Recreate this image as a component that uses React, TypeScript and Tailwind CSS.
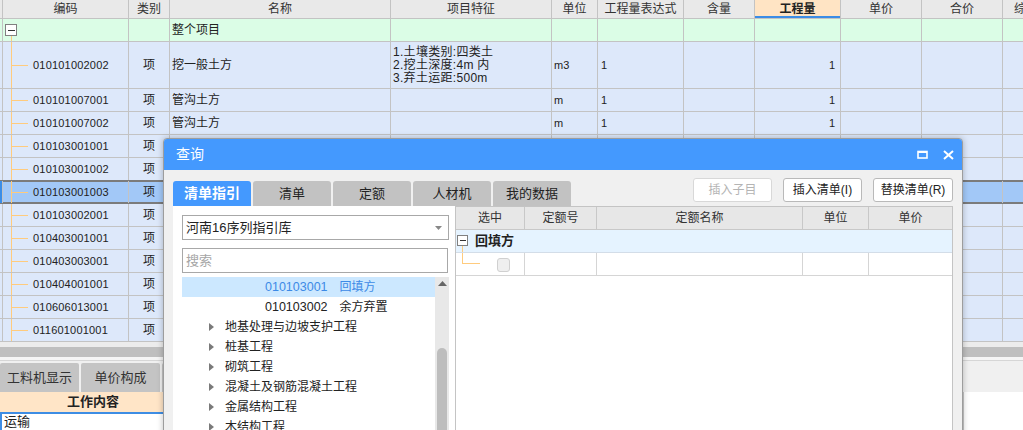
import React from "react";

const FONT = "font-['Liberation_Sans','Noto_Sans_CJK_SC',sans-serif]";

const W = [
  "w-[126px]",
  "w-[41px]",
  "w-[221px]",
  "w-[161px]",
  "w-[46px]",
  "w-[86px]",
  "w-[71px]",
  "w-[86px]",
  "w-[81px]",
  "w-[81px]",
  "flex-1",
];

const heads = ["编码", "类别", "名称", "项目特征", "单位", "工程量表达式", "含量", "工程量", "单价", "合价", "综合单价"];

type Row = {
  code: string;
  name: string;
  feat?: string[];
  unit?: string;
  expr?: string;
  qty?: string;
  tall?: boolean;
  sel?: boolean;
};

const rows: Row[] = [
  {
    code: "010101002002",
    name: "挖一般土方",
    feat: ["1.土壤类别:四类土", "2.挖土深度:4m 内", "3.弃土运距:500m"],
    unit: "m3",
    expr: "1",
    qty: "1",
    tall: true,
  },
  { code: "010101007001", name: "管沟土方", unit: "m", expr: "1", qty: "1" },
  { code: "010101007002", name: "管沟土方", unit: "m", expr: "1", qty: "1" },
  { code: "010103001001", name: "回填方" },
  { code: "010103001002", name: "回填方" },
  { code: "010103001003", name: "回填方", sel: true },
  { code: "010103002001", name: "余方弃置" },
  { code: "010403001001", name: "砖基础" },
  { code: "010403003001", name: "实心砖墙" },
  { code: "010404001001", name: "垫层" },
  { code: "010606013001", name: "零星钢构件" },
  { code: "011601001001", name: "砖砌体拆除" },
];

const line = "bg-[#ffcb7d]";

function MainTable() {
  return (
    <div className="flex flex-col">
      <div className="flex h-[19px] border-b border-[#c3c3c3] bg-[#e9e9e9] text-[12px] text-[#333]">
        <div className="w-[2px] shrink-0" />
        {heads.map((h, i) => (
          <div
            key={h}
            className={`${W[i]} shrink-0 border-l border-[#c3c3c3] flex items-center whitespace-nowrap overflow-hidden ${
              i === 10 ? "justify-start pl-[11px]" : "justify-center"
            } ${i === 7 ? "bg-[#ffe4c4] font-bold text-[#222] shadow-[inset_0_-2px_0_#3b8de6]" : ""}`}
          >
            {h}
          </div>
        ))}
      </div>

      {/* 整个项目 */}
      <div className="flex h-[23px] border-b border-[#c3c3c3] bg-[#dbfde6] text-[12px]">
        <div className="w-[2px] shrink-0" />
        <div className={`${W[0]} shrink-0 border-l border-[#c3c3c3] flex flex-col items-start pl-[2px] pt-[5px]`}>
          <div className="w-[12px] h-[12px] border border-[#808080] bg-white flex items-center justify-center">
            <div className="w-[7px] h-px bg-[#333]" />
          </div>
          <div className={`ml-[6px] w-px flex-1 ${line}`} />
        </div>
        <div className={`${W[1]} shrink-0 border-l border-[#c3c3c3]`} />
        <div className={`${W[2]} shrink-0 border-l border-[#c3c3c3] flex items-center pl-[2px]`}>整个项目</div>
        {[3, 4, 5, 6, 7, 8, 9, 10].map((i) => (
          <div key={i} className={`${W[i]} shrink-0 border-l border-[#c3c3c3]`} />
        ))}
      </div>

      {rows.map((r) => (
        <div
          key={r.code}
          className={`flex ${r.tall ? "h-[47px]" : "h-[23px]"} border-b text-[12px] ${
            r.sel
              ? "bg-[#a2c8f7] border-[#7b7b7b] shadow-[0_-1px_0_#7b7b7b,inset_0_1px_0_#7b7b7b,inset_0_-1px_0_#7b7b7b]"
              : "bg-[#dde8fa] border-[#c3c3c3]"
          }`}
        >
          <div className={`w-[2px] shrink-0 ${r.sel ? "bg-[#3b8de6]" : ""}`} />
          <div className={`${W[0]} shrink-0 border-l border-[#c3c3c3] flex pl-[8px]`}>
            <div className="w-[22px] shrink-0 border-l border-[#ffcb7d] flex items-center">
              <div className={`h-px w-[16px] ${line}`} />
            </div>
            <span className="self-center text-[11px] tracking-[0.2px]">{r.code}</span>
          </div>
          <div className={`${W[1]} shrink-0 border-l border-[#c3c3c3] flex items-center justify-center`}>项</div>
          <div className={`${W[2]} shrink-0 border-l border-[#c3c3c3] flex items-center pl-[2px]`}>{r.name}</div>
          <div className={`${W[3]} shrink-0 border-l border-[#c3c3c3] flex flex-col justify-center pl-[2px] text-[12px] leading-[13px] tracking-[0.3px] whitespace-nowrap`}>
            {r.feat?.map((f) => (
              <span key={f}>{f}</span>
            ))}
          </div>
          <div className={`${W[4]} shrink-0 border-l border-[#c3c3c3] flex items-center pl-[2px] text-[11px]`}>{r.unit}</div>
          <div className={`${W[5]} shrink-0 border-l border-[#c3c3c3] flex items-center pl-[3px] text-[11px]`}>{r.expr}</div>
          <div className={`${W[6]} shrink-0 border-l border-[#c3c3c3]`} />
          <div className={`${W[7]} shrink-0 border-l border-[#c3c3c3] flex items-center justify-end pr-[5px] text-[11px]`}>{r.qty}</div>
          <div className={`${W[8]} shrink-0 border-l border-[#c3c3c3]`} />
          <div className={`${W[9]} shrink-0 border-l border-[#c3c3c3]`} />
          <div className={`${W[10]} shrink-0 border-l border-[#c3c3c3]`} />
        </div>
      ))}
    </div>
  );
}

function BottomPanel() {
  return (
    <div className="flex flex-col">
      <div className="h-[5px] bg-[#ececec]" />
      <div className="h-[10px] bg-[#bfbfbf]" />
      <div className="h-[4px] bg-[#f5f5f5] border-b border-[#d6d6d6]" />
      <div className="flex h-[31px] items-end gap-[2px] bg-[#f0f0f0]">
        <div className="w-[79px] h-[29px] rounded-t-[2px] bg-[#c4c4c4] flex items-center justify-center text-[13px] text-[#333]">
          工料机显示
        </div>
        <div className="w-[79px] h-[29px] rounded-t-[2px] bg-[#c4c4c4] flex items-center justify-center text-[13px] text-[#333]">
          单价构成
        </div>
        <div className="w-[79px] h-[29px] rounded-t-[2px] bg-[#c4c4c4]" />
      </div>
      <div className="flex h-[38px]">
        <div className="w-[963px] flex flex-col">
          <div className="h-[20px] bg-[#ffe5c7] flex items-center">
            <span className="w-[186px] text-center font-bold text-[13px] text-[#222]">工作内容</span>
          </div>
          <div className="flex-1 border-t-2 border-l-2 border-[#3e8de4] bg-white pl-[2px] text-[13px] leading-[16px]">
            运输
          </div>
        </div>
        <div className="flex-1 bg-white border-l border-[#c8c8c8]" />
      </div>
    </div>
  );
}

const tabs = ["清单指引", "清单", "定额", "人材机", "我的数据"];

const chapters = [
  "地基处理与边坡支护工程",
  "桩基工程",
  "砌筑工程",
  "混凝土及钢筋混凝土工程",
  "金属结构工程",
  "木结构工程",
  "门窗工程",
];

function Arrow() {
  return (
    <svg width="5" height="8" viewBox="0 0 5 8" className="shrink-0">
      <path d="M0 0 L5 4 L0 8 Z" fill="#7a7a7a" />
    </svg>
  );
}

function QueryDialog() {
  return (
    <div className="absolute left-[163px] top-[138px] w-[800px] h-[300px] border border-[#9d9d9d] rounded-t-[4px] bg-[#f0f0f0] shadow-[0_0_6px_rgba(0,0,0,0.25)] flex flex-col overflow-hidden">
      <div className="h-[31px] shrink-0 bg-[#4499fe] flex items-center justify-between pl-[12px] pr-[8px]">
        <span className="text-[14px] text-white">查询</span>
        <div className="flex items-center gap-[15px]">
          <svg width="11" height="9" viewBox="0 0 11 9">
            <rect x="1" y="1.5" width="9" height="6.5" fill="none" stroke="#fff" strokeWidth="1.6" />
            <rect x="1" y="1" width="9" height="2" fill="#fff" />
          </svg>
          <svg width="11" height="10" viewBox="0 0 11 10">
            <path d="M1 1 L10 9 M10 1 L1 9" stroke="#fff" strokeWidth="2" />
          </svg>
        </div>
      </div>

      <div className="flex-1 flex flex-col px-[9px] pt-[8px]">
        <div className="flex justify-between h-[28px] shrink-0">
          <div className="flex items-end gap-[2px] h-full">
            {tabs.map((t, i) => (
              <div
                key={t}
                className={`w-[78px] h-[25px] rounded-t-[3px] flex items-center justify-center ${
                  i === 0 ? "bg-[#4499fe] text-white text-[14px] font-bold" : "bg-[#c2c2c2] text-[#222] text-[13px]"
                }`}
              >
                {t}
              </div>
            ))}
          </div>
          <div className="flex items-start gap-[11px]">
            <div className="w-[79px] h-[24px] rounded-[3px] border border-[#d8d8d8] bg-white flex items-center justify-center text-[12px] text-[#b4b4b4]">
              插入子目
            </div>
            <div className="w-[79px] h-[24px] rounded-[3px] border border-[#b9b9b9] bg-white flex items-center justify-center text-[12px] text-[#222]">
              插入清单(I)
            </div>
            <div className="w-[80px] h-[24px] rounded-[3px] border border-[#b9b9b9] bg-white flex items-center justify-center text-[12px] text-[#222]">
              替换清单(R)
            </div>
          </div>
        </div>

        <div className="flex flex-1">
          <div className="w-[282px] shrink-0 bg-white pl-[9px] pt-[9px] flex flex-col">
            <div className="w-[267px] h-[25px] border border-[#a8a8a8] flex items-center justify-between pl-[3px] pr-[6px] text-[13px] text-[#222]">
              <span>河南16序列指引库</span>
              <svg width="7" height="4" viewBox="0 0 7 4">
                <path d="M0 0 L7 0 L3.5 4 Z" fill="#888" />
              </svg>
            </div>
            <div className="mt-[8px] w-[266px] h-[25px] border border-[#a8a8a8] flex items-center pl-[3px] text-[13px] text-[#a6a6a6]">
              搜索
            </div>
            <div className="mt-[4px] flex flex-1">
              <div className="w-[253px] flex flex-col text-[12px]">
                <div className="h-[20px] bg-[#cce8ff] flex items-center pl-[83px] gap-[12px] text-[#3d8ae6]">
                  <span className="text-[12.5px]">010103001</span>
                  <span>回填方</span>
                </div>
                <div className="h-[20px] flex items-center pl-[83px] gap-[12px] text-[#222]">
                  <span className="text-[12.5px]">010103002</span>
                  <span>余方弃置</span>
                </div>
                {chapters.map((c) => (
                  <div key={c} className="h-[20px] flex items-center pl-[27px] gap-[11px] text-[#222]">
                    <Arrow />
                    <span>{c}</span>
                  </div>
                ))}
              </div>
              <div className="w-[14px] bg-[#e8e8e8] flex flex-col items-center pt-[4px]">
                <svg width="9" height="5" viewBox="0 0 9 5">
                  <path d="M0 5 L4.5 0 L9 5 Z" fill="#666" />
                </svg>
                <div className="mt-[62px] w-[10px] flex-1 rounded-full bg-[#bdbdbd]" />
              </div>
            </div>
          </div>

          <div className="w-[498px] shrink-0 border border-[#c4c4c4] bg-white flex flex-col text-[12px] text-[#333]">
            <div className="flex h-[23px] bg-[#e7e7e7] border-b border-[#c8c8c8]">
              <div className="w-[69px] border-r border-[#c8c8c8] flex items-center justify-center">选中</div>
              <div className="w-[72px] border-r border-[#c8c8c8] flex items-center justify-center">定额号</div>
              <div className="w-[206px] border-r border-[#c8c8c8] flex items-center justify-center">定额名称</div>
              <div className="w-[66px] border-r border-[#c8c8c8] flex items-center justify-center">单位</div>
              <div className="flex-1 flex items-center justify-center">单价</div>
            </div>
            <div className="flex h-[23px] bg-[#e5f3ff] border-b border-[#d3dde8]">
              <div className="flex flex-col items-center self-end ml-[1px]">
                <div className="w-[11px] h-[11px] border border-[#808080] bg-white flex items-center justify-center">
                  <div className="w-[6px] h-px bg-[#333]" />
                </div>
                <div className={`w-px h-[6px] ${line}`} />
              </div>
              <span className="self-center ml-[7px] font-bold text-[13px] text-[#222]">回填方</span>
            </div>
            <div className="flex h-[23px] border-b border-[#d5d5d5]">
              <div className="w-[69px] border-r border-[#d5d5d5] flex">
                <div className="ml-[6px] w-[18px] h-[11px] border-l border-b border-[#ffcb7d]" />
                <div className="ml-[17px] mt-[5px] w-[13px] h-[14px] rounded-[3px] border border-[#d0d0d0] bg-[#efefef]" />
              </div>
              <div className="w-[72px] border-r border-[#d5d5d5]" />
              <div className="w-[206px] border-r border-[#d5d5d5]" />
              <div className="w-[66px] border-r border-[#d5d5d5]" />
              <div className="flex-1" />
            </div>
          </div>
        </div>
      </div>
    </div>
  );
}

export default function App() {
  return (
    <div className={`relative w-[1023px] h-[430px] overflow-hidden bg-white text-[#222] ${FONT}`}>
      <MainTable />
      <BottomPanel />
      <QueryDialog />
    </div>
  );
}
